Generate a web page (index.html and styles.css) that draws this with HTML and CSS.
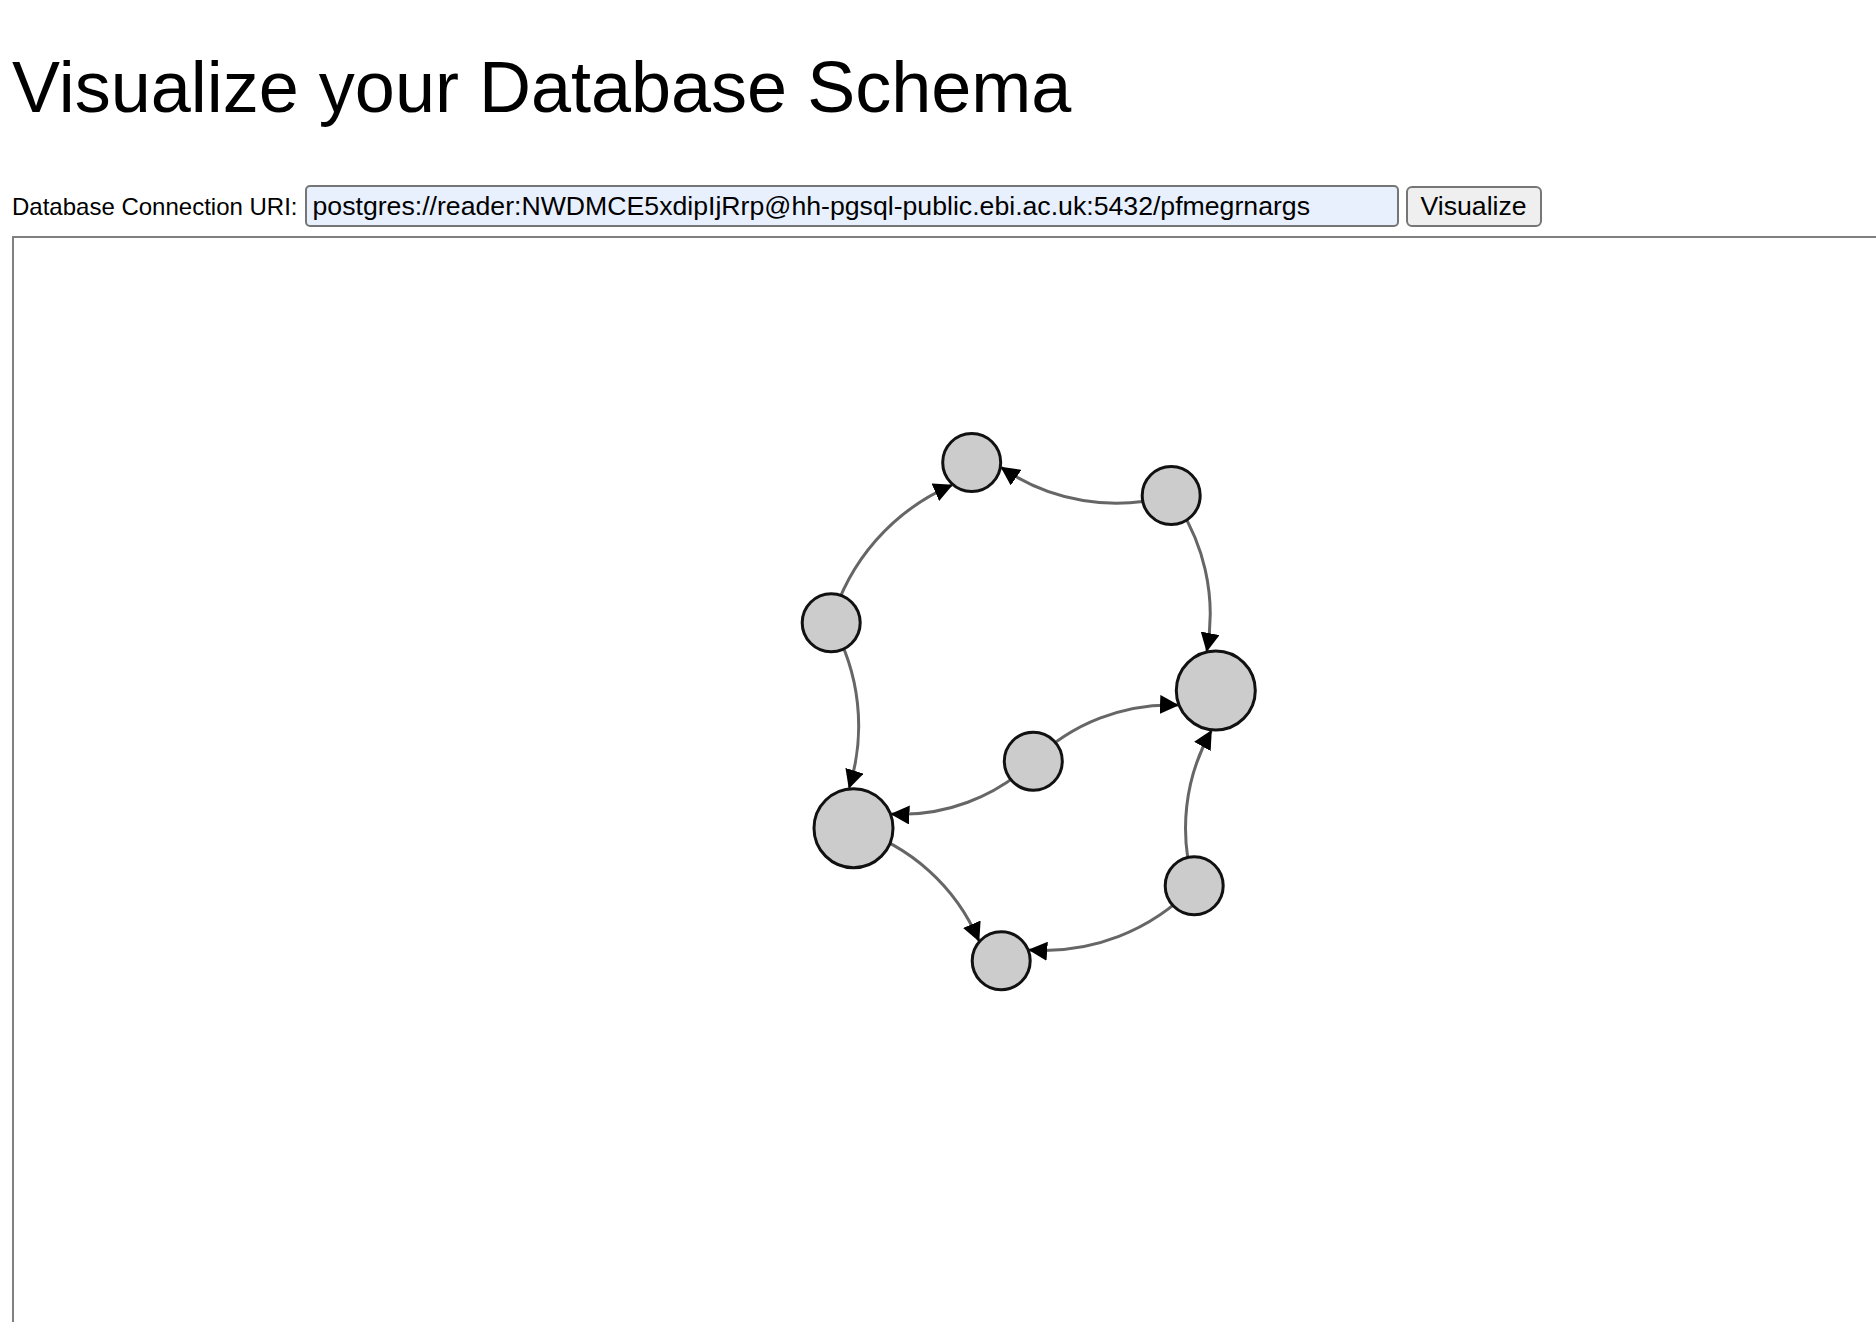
FILE: index.html
```html
<!DOCTYPE html>
<html lang="en">
<head>
<meta charset="utf-8">
<title>Visualize your Database Schema</title>
<link rel="stylesheet" href="styles.css">
</head>
<body>
<h1 class="title">Visualize your Database Schema</h1>
<form class="uri-row" onsubmit="return false">
  <label class="uri-label" for="uri">Database Connection URI:</label>
  <input class="uri-input" id="uri" type="text" value="postgres://reader:NWDMCE5xdipIjRrp@hh-pgsql-public.ebi.ac.uk:5432/pfmegrnargs">
  <button class="uri-button" type="submit">Visualize</button>
</form>
<div class="canvas">
  <svg class="graph" width="2000" height="1200" viewBox="0 0 2000 1200">
    <defs>
      <marker id="arrow" viewBox="0 -9.5 19 19" refX="18" refY="0" markerWidth="19" markerHeight="19" markerUnits="userSpaceOnUse" orient="auto">
        <path d="M0,-9.5L19,0L0,9.5Z" fill="#000"/>
      </marker>
    </defs>
    <g transform="translate(-14 -238)">
      <g class="links">
        <path class="link" d="M831.2,622.8 A213.2,213.2 0 0,1 951.9,485.1"/>
        <path class="link" d="M1171.2,495.5 A202.2,202.2 0 0,1 1001.3,467.4"/>
        <path class="link" d="M1171.2,495.5 A200,200 0 0,1 1206.8,651.0"/>
        <path class="link" d="M831.2,622.8 A206.6,206.6 0 0,1 849.1,787.9"/>
        <path class="link" d="M1033.3,761.2 A195.7,195.7 0 0,1 1178.0,705.1"/>
        <path class="link" d="M1033.3,761.2 A191.9,191.9 0 0,1 891.4,814.1"/>
        <path class="link" d="M1194.2,885.8 A196.5,196.5 0 0,1 1211.3,730.8"/>
        <path class="link" d="M853.5,828.2 A198.5,198.5 0 0,1 978.9,940.8"/>
        <path class="link" d="M1194.2,885.8 A207.1,207.1 0 0,1 1029.2,949.9"/>
      </g>
      <g class="nodes">
        <circle class="node" cx="971.7" cy="462.5" r="29"/>
        <circle class="node" cx="1171.2" cy="495.5" r="29"/>
        <circle class="node" cx="831.2" cy="622.8" r="29"/>
        <circle class="node" cx="1215.8" cy="690.5" r="39.5"/>
        <circle class="node" cx="1033.3" cy="761.2" r="29"/>
        <circle class="node" cx="853.5" cy="828.2" r="39.5"/>
        <circle class="node" cx="1194.2" cy="885.8" r="29"/>
        <circle class="node" cx="1001.2" cy="960.8" r="29"/>
      </g>
    </g>
  </svg>
</div>
</body>
</html>
```
FILE: styles.css
```css
html {
  overflow: hidden;
  background: #fff;
}

body {
  margin: 0;
  padding: 0 0 0 12px;
  font-family: "Liberation Sans", Arial, Helvetica, sans-serif;
  color: #000;
}

.title {
  font-size: 72px;
  font-weight: normal;
  line-height: 83px;
  margin: 46px 0 56px;
}

.uri-row {
  display: flex;
  align-items: baseline;
  gap: 7px;
  margin: 0 0 9px;
}

.uri-label {
  font-size: 24px;
}

.uri-input {
  box-sizing: border-box;
  width: 1094px;
  height: 42px;
  padding: 0 4px 0 6px;
  border: 2px solid #767676;
  border-radius: 5px;
  background: #e8f0fe;
  color: #000;
  font-family: "Liberation Sans", Arial, Helvetica, sans-serif;
  font-size: 26.67px;
  outline: none;
}

.uri-button {
  box-sizing: border-box;
  height: 41px;
  padding: 0 13px;
  border: 2px solid #767676;
  border-radius: 6px;
  background: #efefef;
  color: #000;
  font-family: "Liberation Sans", Arial, Helvetica, sans-serif;
  font-size: 26.67px;
}

.canvas {
  width: 2000px;
  height: 1200px;
  border: 2px solid #808080;
}

.graph {
  display: block;
}

.link {
  fill: none;
  stroke: #666;
  stroke-width: 3;
  marker-end: url(#arrow);
}

.node {
  fill: #ccc;
  stroke: #111;
  stroke-width: 3;
}
```
